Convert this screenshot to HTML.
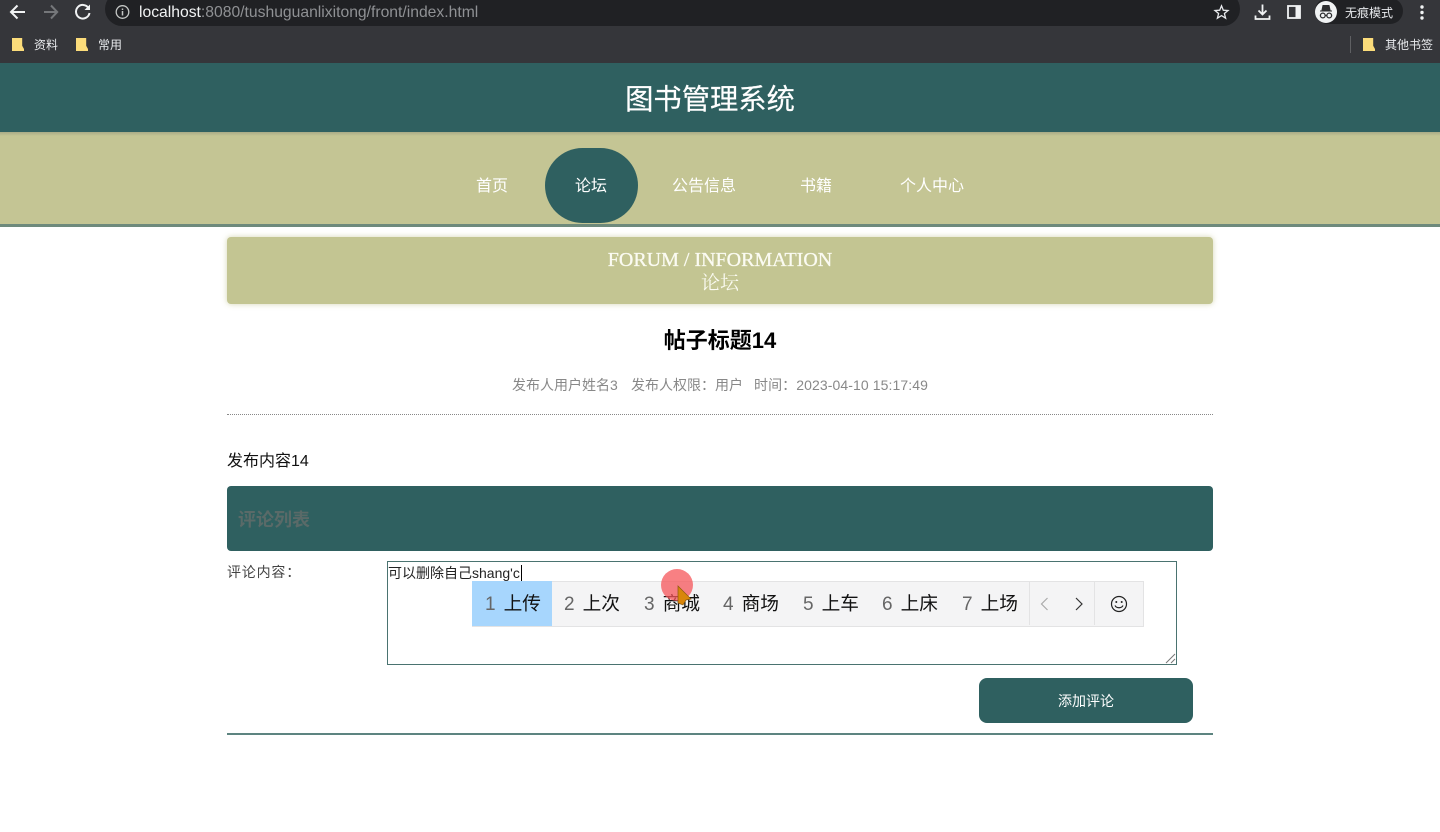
<!DOCTYPE html>
<html lang="zh">
<head>
<meta charset="utf-8">
<title>图书管理系统</title>
<style>
html,body{margin:0;padding:0;width:1440px;height:832px;overflow:hidden;background:#fff;}
body{position:relative;font-family:"Liberation Sans","Noto Sans CJK SC",sans-serif;}
.a{position:absolute;white-space:nowrap;}
.c{text-align:center;}
svg{position:absolute;overflow:visible;}
.bm{position:absolute;width:12px;height:13px;background:#fbdc7a;clip-path:polygon(0 0,85% 0,85% 60%,100% 85%,100% 100%,0 100%);}
.cand{position:absolute;top:593px;height:22px;line-height:22px;font-size:18.700px;color:#111;white-space:nowrap;}
.cand i{font-style:normal;color:#666;margin-right:8px;font-size:19px;}
.nv{font-size:16px;line-height:20px;color:#fff;top:177px;}
</style>
</head>
<body>
<!-- browser chrome -->
<div class="a" style="left:0;top:0;width:1440px;height:27px;background:#35363a;"></div>
<div class="a" style="left:0;top:27px;width:1440px;height:36px;background:#35363a;"></div>
<div class="a" style="left:105px;top:-8px;width:1135px;height:34px;background:#202124;border-radius:17px;"></div>
<svg style="left:0;top:0" width="110" height="26" fill="none">
  <path d="M25 12H11M17.500 5.500L11 12 17.500 18.500" stroke="#f1f3f4" stroke-width="2"/>
  <path d="M44 12H57M51 5.500L57.200 12 51 18.500" stroke="#75777a" stroke-width="2"/>
  <path d="M88.500 8A6.800 6.800 0 1 0 89.500 13" stroke="#f1f3f4" stroke-width="2"/>
  <path d="M90 4.500V10H84.500Z" fill="#f1f3f4"/>
</svg>
<svg style="left:115px;top:4px" width="16" height="16" fill="none">
  <circle cx="7.500" cy="8" r="6.300" stroke="#c4c7c5" stroke-width="1.300"/>
  <path d="M7.500 7V11.500M7.500 4.500V6" stroke="#c4c7c5" stroke-width="1.500"/>
</svg>
<div class="a" style="left:139px;top:4px;font-size:15.700px;line-height:18px;color:#8f9194;"><span style="color:#f1f3f4">localhost</span>:8080/tushuguanlixitong/front/index.html</div>
<svg style="left:1213px;top:4px" width="16" height="16" fill="none">
  <path d="M8.500 1.800L10.300 6.200 15 6.500 11.400 9.500 12.600 14.200 8.500 11.600 4.400 14.200 5.600 9.500 2 6.500 6.700 6.200Z" stroke="#e8eaed" stroke-width="1.300"/>
</svg>
<svg style="left:1254px;top:3px" width="18" height="18" fill="none">
  <path d="M8.500 1.500V11M4.500 7.500L8.500 11.500 12.500 7.500M1.500 12.500V16H15.500V12.500" stroke="#f1f3f4" stroke-width="1.800"/>
</svg>
<svg style="left:1287px;top:4px" width="16" height="16" fill="none">
  <rect x="1" y="2" width="12" height="12" stroke="#f1f3f4" stroke-width="1.800"/>
  <rect x="8.500" y="2" width="4.500" height="12" fill="#f1f3f4"/>
</svg>
<div class="a" style="left:1315px;top:-2px;width:88px;height:26px;background:#202124;border-radius:13px;"></div>
<div class="a" style="left:1315px;top:1px;width:22px;height:22px;border-radius:50%;background:#f1f3f4;"></div>
<svg style="left:1315px;top:1px" width="22" height="22" fill="none">
  <path d="M5 10H17M7 9L8 4.500H14L15 9Z" fill="#2d2e30" stroke="#2d2e30" stroke-width="1"/>
  <circle cx="7.800" cy="14.500" r="2.400" stroke="#2d2e30" stroke-width="1.300"/>
  <circle cx="14.200" cy="14.500" r="2.400" stroke="#2d2e30" stroke-width="1.300"/>
  <path d="M10 14.500H12" stroke="#2d2e30"/>
</svg>
<div class="a" style="left:1345px;top:5px;font-size:12px;line-height:16px;color:#e8eaed;">无痕模式</div>
<svg style="left:1416px;top:4px" width="12" height="17">
  <circle cx="6" cy="3" r="1.700" fill="#f1f3f4"/>
  <circle cx="6" cy="8.500" r="1.700" fill="#f1f3f4"/>
  <circle cx="6" cy="14" r="1.700" fill="#f1f3f4"/>
</svg>
<div class="bm" style="left:12px;top:38px;"></div>
<div class="a" style="left:34px;top:37px;font-size:12px;line-height:16px;color:#e8eaed;">资料</div>
<div class="bm" style="left:76px;top:38px;"></div>
<div class="a" style="left:98px;top:37px;font-size:12px;line-height:16px;color:#e8eaed;">常用</div>
<div class="a" style="left:1350px;top:36px;width:1px;height:17px;background:#5f6063;"></div>
<div class="bm" style="left:1363px;top:38px;"></div>
<div class="a" style="left:1385px;top:37px;font-size:12px;line-height:16px;color:#e8eaed;">其他书签</div>

<!-- header -->
<div class="a" style="left:0;top:63px;width:1440px;height:69px;background:#2f6060;"></div>
<div class="a c" style="left:0;top:80px;width:1420px;font-size:28.300px;line-height:38px;color:#fff;-webkit-text-stroke:.2px #fff;">图书管理系统</div>

<!-- nav -->
<div class="a" style="left:0;top:132px;width:1440px;height:92px;background:linear-gradient(#a9ab87 0,#c4c594 4px);"></div>
<div class="a" style="left:0;top:224px;width:1440px;height:3px;background:#6e8a7c;"></div>
<div class="a" style="left:545px;top:148px;width:93px;height:75px;background:#2f6060;border-radius:37.500px;"></div>
<div class="a c nv" style="left:462px;width:60px;">首页</div>
<div class="a c nv" style="left:561px;width:60px;">论坛</div>
<div class="a c nv" style="left:664px;width:80px;">公告信息</div>
<div class="a c nv" style="left:786px;width:60px;">书籍</div>
<div class="a c nv" style="left:892px;width:80px;">个人中心</div>

<!-- section title -->
<div class="a" style="left:227px;top:237px;width:986px;height:67px;background:#c3c592;border-radius:4px;box-shadow:0 0 6px rgba(195,197,146,.7);"></div>
<div class="a c" style="left:227px;top:249px;width:986px;font-family:'Liberation Serif','Noto Serif CJK SC',serif;font-size:20px;line-height:22px;color:#fbfbf2;-webkit-text-stroke:.3px #fbfbf2;">FORUM / INFORMATION</div>
<div class="a c" style="left:227px;top:272px;width:986px;font-family:'Liberation Serif','Noto Serif CJK SC',serif;font-size:19px;line-height:24px;color:#fbfbf2;">论坛</div>

<!-- detail -->
<div class="a c" style="left:227px;top:327px;width:986px;font-size:22px;line-height:28px;font-weight:bold;color:#000;">帖子标题14</div>
<div class="a" style="left:512px;top:376px;font-size:14px;line-height:18px;color:#888;">发布人用户姓名3</div>
<div class="a" style="left:631px;top:376px;font-size:14px;line-height:18px;color:#888;">发布人权限：用户</div>
<div class="a" style="left:754px;top:376px;font-size:14px;line-height:18px;color:#888;letter-spacing:.09px;">时间：2023-04-10 15:17:49</div>
<div class="a" style="left:227px;top:414px;width:986px;border-top:1px dotted #888;"></div>
<div class="a" style="left:227px;top:451px;font-size:16px;line-height:22px;color:#111;">发布内容14</div>

<!-- comments header -->
<div class="a" style="left:227px;top:486px;width:986px;height:65px;background:#2f6060;border-radius:4px;"></div>
<div class="a" style="left:238px;top:508px;font-size:18px;line-height:24px;font-weight:bold;color:#5a6a68;">评论列表</div>

<!-- form -->
<div class="a" style="left:227px;top:562px;font-size:14px;line-height:20px;color:#444;letter-spacing:.8px;">评论内容：</div>
<div class="a" style="left:387px;top:561px;width:788px;height:102px;border:1px solid #4a7370;background:#fff;"></div>
<div class="a" style="left:388px;top:564px;font-size:14px;line-height:18px;color:#222;">可以删除自己<span style="border-bottom:1px dotted #333;">shang'c</span></div>
<div class="a" style="left:521px;top:565px;width:1px;height:16px;background:#000;"></div>
<svg style="left:1164px;top:652px" width="12" height="12" fill="none">
  <path d="M2 11L11 2M7 11L11 7" stroke="#777" stroke-width="1"/>
</svg>

<!-- IME candidate bar -->
<div class="a" style="left:472px;top:581px;width:671px;height:44px;background:#f4f4f5;border:1px solid #e3e3e4;border-left:0;"></div>
<div class="a" style="left:472px;top:581px;width:80px;height:45px;background:#a7d6fd;"></div>
<div class="a" style="left:1029px;top:582px;width:1px;height:43px;background:#e3e3e4;"></div>
<div class="a" style="left:1094px;top:582px;width:1px;height:43px;background:#e3e3e4;"></div>
<div class="cand" style="left:485px;"><i>1</i>上传</div>
<div class="cand" style="left:564px;"><i>2</i>上次</div>
<div class="cand" style="left:644px;"><i>3</i>商城</div>
<div class="cand" style="left:723px;"><i>4</i>商场</div>
<div class="cand" style="left:803px;"><i>5</i>上车</div>
<div class="cand" style="left:882px;"><i>6</i>上床</div>
<div class="cand" style="left:962px;"><i>7</i>上场</div>
<svg style="left:1038px;top:596px" width="52" height="16" fill="none">
  <path d="M9.500 2L3.500 8 9.500 14" stroke="#aaa" stroke-width="1.200"/>
  <path d="M38 2L44 8 38 14" stroke="#333" stroke-width="1.200"/>
</svg>
<svg style="left:1110px;top:595px" width="18" height="18" fill="none">
  <circle cx="9" cy="9" r="7.500" stroke="#222" stroke-width="1.200"/>
  <circle cx="6.300" cy="7" r="1" fill="#222"/>
  <circle cx="11.700" cy="7" r="1" fill="#222"/>
  <path d="M5 10.500C6.500 13.500 11.500 13.500 13 10.500" stroke="#222" stroke-width="1.200"/>
</svg>

<!-- cursor highlight -->
<div class="a" style="left:661px;top:569px;width:32px;height:32px;border-radius:50%;background:rgba(245,85,90,.75);"></div>
<svg style="left:677px;top:585px" width="16" height="22">
  <path d="M1 1L14 14 9 15 6 20 1 18Z" fill="#d9860b" stroke="#8a5a10" stroke-width=".7"/>
</svg>

<!-- button -->
<div class="a c" style="left:979px;top:678px;width:214px;height:45px;line-height:46px;background:#2f6060;border-radius:8px;color:#fff;font-size:14px;">添加评论</div>
<div class="a" style="left:227px;top:733px;width:986px;height:2px;background:#5d8480;"></div>
</body>
</html>
